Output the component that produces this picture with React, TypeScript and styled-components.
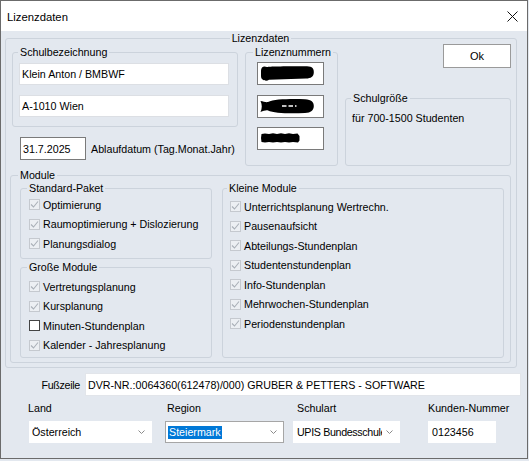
import React from 'react';
import styled, { createGlobalStyle } from 'styled-components';

const bg = '#e3e8ef';
const groupEdge = '#ccd3dc';

const GlobalStyle = createGlobalStyle`
  html, body {
    margin: 0;
    padding: 0;
    background: ${bg};
  }
  body {
    font-family: "Liberation Sans", Arial, sans-serif;
    font-size: 10.7px;
    color: #000;
  }
  * {
    box-sizing: border-box;
  }
`;

const Window = styled.div`
  width: 528px;
  height: 459px;
  border: 1px solid #6b6b6b;
  background: ${bg};
  display: flex;
  flex-direction: column;
  overflow: hidden;
`;

const TitleBar = styled.div`
  flex: none;
  height: 30px;
  background: #fff;
  display: flex;
  align-items: center;
  justify-content: space-between;
  padding: 1px 9px 0 6px;
  font-size: 11.3px;
`;

const Body = styled.div`
  padding-top: 7px;
`;

const GroupBox = styled.div<{ $w?: number; $h?: number }>`
  border: 1px solid ${groupEdge};
  border-radius: 3px;
  ${(p) => (p.$w ? `width: ${p.$w}px;` : '')}
  ${(p) => (p.$h ? `height: ${p.$h}px;` : '')}
  flex: none;
`;

const OuterGroup = styled(GroupBox)`
  margin: 0 10px 0 4px;
  padding: 0 5px 0 4px;
`;

const Caption = styled.div<{ $left?: number; $center?: boolean; $flat?: boolean }>`
  width: fit-content;
  margin: -7px ${(p) => (p.$center ? 'auto' : '0')} ${(p) => (p.$flat ? '-6px' : '0')}
    ${(p) => (p.$center ? 'auto' : `${p.$left ?? 0}px`)};
  padding: 0 2px;
  line-height: 13px;
  background: ${bg};
  white-space: nowrap;
`;

const TopRow = styled.div`
  display: flex;
  align-items: flex-start;
  gap: 7px;
  margin-top: 5px;
  padding-left: 2px;
`;

const LeftCol = styled.div`
  width: 226px;
  padding-top: 8px;
  display: flex;
  flex-direction: column;
`;

const RightCol = styled.div`
  width: 166px;
  display: flex;
  flex-direction: column;
  align-items: flex-end;
`;

const InputStack = styled.div<{ $top: number; $left: number; $gap: number }>`
  display: flex;
  flex-direction: column;
  gap: ${(p) => p.$gap}px;
  margin: ${(p) => p.$top}px 0 0 ${(p) => p.$left}px;
`;

const TextBox = styled.div<{ $w: number; $h?: number; $edge?: string }>`
  width: ${(p) => p.$w}px;
  height: ${(p) => p.$h ?? 22}px;
  background: #fff;
  border: 1px solid ${(p) => p.$edge ?? '#fff'};
  padding-left: 2px;
  display: flex;
  align-items: center;
  white-space: nowrap;
  overflow: hidden;
  flex: none;
`;

const DateRow = styled.div`
  display: flex;
  align-items: center;
  gap: 5px;
  margin: 10px 0 0 8px;
`;

const LicenseGroup = styled(GroupBox)`
  margin-top: 8px;
`;

const OkButton = styled.button`
  width: 68px;
  height: 24px;
  background: #fff;
  border: 1px solid #9a9a9a;
  font: inherit;
  font-size: 11px;
  padding: 0;
  color: #000;
`;

const SizeGroup = styled(GroupBox)`
  margin-top: 30px;
`;

const SizeText = styled.div`
  margin: 7px 0 0 6px;
  line-height: 13px;
`;

const ModuleGroup = styled(GroupBox)`
  margin-top: 9px;
`;

const ModuleGrid = styled.div`
  display: grid;
  grid-template-columns: 192px 282px;
  column-gap: 10px;
  padding: 12px 0 0 9px;
`;

const ModuleCol = styled.div`
  display: flex;
  flex-direction: column;
  gap: 8px;
`;

const CheckList = styled.div<{ $top: number; $indent: number }>`
  margin-top: ${(p) => p.$top}px;
  padding-left: ${(p) => p.$indent}px;
`;

const CheckRow = styled.div`
  height: 19.5px;
  display: flex;
  align-items: center;
  white-space: nowrap;
`;

const CheckBox = styled.span<{ $disabled: boolean }>`
  width: 11px;
  height: 11px;
  margin-right: 3px;
  flex: none;
  border: 1px solid ${(p) => (p.$disabled ? '#c5c9cf' : '#444')};
  background: ${(p) => (p.$disabled ? '#eceff3' : '#fff')};
  display: flex;
  align-items: center;
  justify-content: center;
`;

const FooterRow = styled.div`
  display: flex;
  justify-content: flex-end;
  align-items: center;
  gap: 5px;
  margin-top: 5px;
  padding-right: 6px;
`;

const FooterLabel = styled.span`
  letter-spacing: -0.3px;
`;

const FieldsRow = styled.div`
  display: grid;
  grid-template-columns: 137px 128px 135px auto;
  margin-top: 6px;
  padding-left: 27px;
`;

const Field = styled.div`
  display: flex;
  flex-direction: column;
`;

const FieldLabel = styled.div<{ $left?: number }>`
  line-height: 13px;
  margin-left: ${(p) => p.$left ?? 0}px;
  white-space: nowrap;
`;

const Combo = styled.div<{ $w: number; $left?: number; $edge?: string; $pad?: number }>`
  width: ${(p) => p.$w}px;
  height: 22px;
  margin: 6px 0 0 ${(p) => p.$left ?? 0}px;
  background: #fff;
  border: 1px solid ${(p) => p.$edge ?? '#fff'};
  display: flex;
  align-items: center;
  padding: 0 6px 0 ${(p) => p.$pad ?? 2}px;
`;

const ComboText = styled.div<{ $tight?: boolean }>`
  flex: 1;
  min-width: 0;
  overflow: hidden;
  white-space: nowrap;
  ${(p) => (p.$tight ? 'letter-spacing: -0.35px;' : '')}
`;

const Selected = styled.span`
  background: #0078d7;
  color: #fff;
  padding: 0 1px;
  line-height: 13px;
  display: inline-block;
`;

const CloseIcon = () => (
  <svg width="11" height="11" viewBox="0 0 11 11">
    <path d="M0.5 0.5 L10.5 10.5 M10.5 0.5 L0.5 10.5" stroke="#111" strokeWidth="1" fill="none" />
  </svg>
);

const Arrow = () => (
  <svg width="7" height="4" viewBox="0 0 7 4" style={{ marginLeft: 4, flex: 'none' }}>
    <path d="M0.5 0.5 L3.5 3.5 L6.5 0.5" stroke="#8a8a8a" strokeWidth="1" fill="none" />
  </svg>
);

const Tick = () => (
  <svg width="9" height="9" viewBox="0 0 9 9">
    <path d="M1 4.5 L3.5 7 L8 1.5" stroke="#aab0b8" strokeWidth="1.1" fill="none" />
  </svg>
);

// hand-blacked licence numbers in the screenshot
const Redact = ({ kind }: { kind: 1 | 2 | 3 }) => {
  if (kind === 1)
    return (
      <svg width="56" height="19" viewBox="0 0 56 19">
        <path
          d="M1 7 C1 2.5 4 1.8 7 3 C10 2.4 20 2.2 47 2.2 C52.5 2.2 54 5 53.8 8.5 C53.6 12.8 51 14.3 46 14.6 L9 15.8 C7 17.5 1 17 1 12 Z"
          fill="#000"
        />
      </svg>
    );
  if (kind === 2)
    return (
      <svg width="56" height="19" viewBox="0 0 56 19">
        <path
          d="M0.5 4 C3.5 4.5 6 5.5 8 5 C14 2 30 1.8 45 2.2 C51.5 2.5 53.8 5 53.8 9 C53.8 13 51 15.8 45 16 C30 16.8 14 16.3 8 13.5 C6 13 3.5 14 0.5 15 C2.2 11.5 2.2 7.5 0.5 4 Z"
          fill="#000"
        />
        <path d="M22 9 L26.5 9 M28.5 9 L33 9 M35 9 L36.5 9" stroke="#fff" strokeWidth="1.3" />
      </svg>
    );
  return (
    <svg width="56" height="19" viewBox="0 0 56 19">
      <path
        d="M1.5 5 L5 4.4 L9 5 L13 4.3 L17 5 L21 4.3 L25 5 L29 4.3 L33 5 L37.5 4.6 L39.5 7 L39.5 11.5 L38 13.5 L33 13 L29 13.6 L25 13 L21 13.6 L17 13 L13 13.6 L9 13 L5 13.6 L1.5 13 L1 9 Z"
        fill="#000"
      />
    </svg>
  );
};

type Item = { label: string; checked: boolean; disabled: boolean };

const standard: Item[] = [
  { label: 'Optimierung', checked: true, disabled: true },
  { label: 'Raumoptimierung + Dislozierung', checked: true, disabled: true },
  { label: 'Planungsdialog', checked: true, disabled: true },
];

const gross: Item[] = [
  { label: 'Vertretungsplanung', checked: true, disabled: true },
  { label: 'Kursplanung', checked: true, disabled: true },
  { label: 'Minuten-Stundenplan', checked: false, disabled: false },
  { label: 'Kalender - Jahresplanung', checked: true, disabled: true },
];

const klein: Item[] = [
  { label: 'Unterrichtsplanung Wertrechn.', checked: true, disabled: true },
  { label: 'Pausenaufsicht', checked: true, disabled: true },
  { label: 'Abteilungs-Stundenplan', checked: true, disabled: true },
  { label: 'Studentenstundenplan', checked: true, disabled: true },
  { label: 'Info-Stundenplan', checked: true, disabled: true },
  { label: 'Mehrwochen-Stundenplan', checked: true, disabled: true },
  { label: 'Periodenstundenplan', checked: true, disabled: true },
];

const Checks = ({ items, top, indent }: { items: Item[]; top: number; indent: number }) => (
  <CheckList $top={top} $indent={indent}>
    {items.map((it) => (
      <CheckRow key={it.label}>
        <CheckBox $disabled={it.disabled}>{it.checked && <Tick />}</CheckBox>
        {it.label}
      </CheckRow>
    ))}
  </CheckList>
);

export default function App() {
  return (
    <>
      <GlobalStyle />
      <Window>
        <TitleBar>
          <span>Lizenzdaten</span>
          <CloseIcon />
        </TitleBar>
        <Body>
          <OuterGroup $h={330}>
            <Caption $center $flat>Lizenzdaten</Caption>
            <TopRow>
              <LeftCol>
                <GroupBox $h={75}>
                  <Caption $left={5}>Schulbezeichnung</Caption>
                  <InputStack $top={4} $left={6} $gap={10}>
                    <TextBox $w={210} $edge="#dcdfe4">Klein Anton / BMBWF</TextBox>
                    <TextBox $w={210} $edge="#dcdfe4">A-1010 Wien</TextBox>
                  </InputStack>
                </GroupBox>
                <DateRow>
                  <TextBox $w={66} $h={23} $edge="#7a7a7a">31.7.2025</TextBox>
                  <span>Ablaufdatum (Tag.Monat.Jahr)</span>
                </DateRow>
              </LeftCol>
              <LicenseGroup $w={93} $h={114}>
                <Caption $left={7}>Lizenznummern</Caption>
                <InputStack $top={3} $left={11} $gap={9.5}>
                  <TextBox $w={67} $h={23} $edge="#7a7a7a"><Redact kind={1} /></TextBox>
                  <TextBox $w={67} $h={23} $edge="#7a7a7a"><Redact kind={2} /></TextBox>
                  <TextBox $w={67} $h={23} $edge="#7a7a7a"><Redact kind={3} /></TextBox>
                </InputStack>
              </LicenseGroup>
              <RightCol>
                <OkButton>Ok</OkButton>
                <SizeGroup $w={166} $h={68}>
                  <Caption $left={5}>Schulgröße</Caption>
                  <SizeText>für 700-1500 Studenten</SizeText>
                </SizeGroup>
              </RightCol>
            </TopRow>
            <ModuleGroup $h={188}>
              <Caption $left={7} $flat>Module</Caption>
              <ModuleGrid>
                <ModuleCol>
                  <GroupBox $h={71}>
                    <Caption $left={6}>Standard-Paket</Caption>
                    <Checks items={standard} top={0} indent={8} />
                  </GroupBox>
                  <GroupBox $h={91}>
                    <Caption $left={6}>Große Module</Caption>
                    <Checks items={gross} top={3} indent={8} />
                  </GroupBox>
                </ModuleCol>
                <GroupBox>
                  <Caption $left={4}>Kleine Module</Caption>
                  <Checks items={klein} top={2} indent={7} />
                </GroupBox>
              </ModuleGrid>
            </ModuleGroup>
          </OuterGroup>
          <FooterRow>
            <FooterLabel>Fußzeile</FooterLabel>
            <TextBox $w={436} $h={23} $edge="#e2e5ea">
              DVR-NR.:0064360(612478)/000) GRUBER &amp; PETTERS - SOFTWARE
            </TextBox>
          </FooterRow>
          <FieldsRow>
            <Field>
              <FieldLabel>Land</FieldLabel>
              <Combo $w={123} $left={1}>
                <ComboText>Österreich</ComboText>
                <Arrow />
              </Combo>
            </Field>
            <Field>
              <FieldLabel $left={2}>Region</FieldLabel>
              <Combo $w={119} $edge="#a6a6a6">
                <ComboText><Selected>Steiermark</Selected></ComboText>
                <Arrow />
              </Combo>
            </Field>
            <Field>
              <FieldLabel $left={4}>Schulart</FieldLabel>
              <Combo $w={107} $pad={3}>
                <ComboText $tight>UPIS Bundesschule</ComboText>
                <Arrow />
              </Combo>
            </Field>
            <Field>
              <FieldLabel>Kunden-Nummer</FieldLabel>
              <Combo $w={68}>
                <ComboText style={{ paddingLeft: 1 }}>0123456</ComboText>
              </Combo>
            </Field>
          </FieldsRow>
        </Body>
      </Window>
    </>
  );
}
